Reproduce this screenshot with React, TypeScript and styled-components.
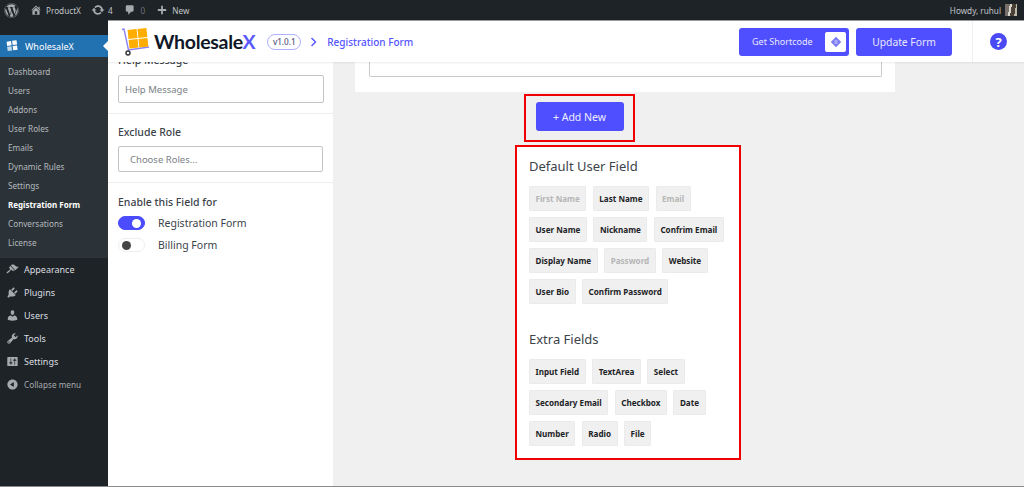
import React from "react";
import styled, { createGlobalStyle } from "styled-components";
import { FaWordpress } from "react-icons/fa";

const Global = createGlobalStyle`
  html, body { margin: 0; padding: 0; height: 100%; overflow: hidden; background: #f0f0f0; }
  #root { height: 100%; }
  * { box-sizing: border-box; }
`;

const Page = styled.div`
  width: 1024px;
  height: 487px;
  display: grid;
  grid-template-rows: 20px 1fr;
  grid-template-columns: 108px 1fr;
  font-family: "Noto Sans", "Open Sans", sans-serif;
  border-bottom: 1px solid #8a8a8a;
  overflow: hidden;
`;

const TopBar = styled.header`
  grid-column: 1 / 3;
  background: #1d2327;
  color: #c3c4c7;
  display: flex;
  align-items: center;
  font-size: 8.2px;
  padding: 0 7px 0 4px;
`;

const BarItem = styled.span<{ $gap?: number; $mr?: number; $dim?: boolean }>`
  display: inline-flex;
  align-items: center;
  gap: ${p => p.$gap ?? 4}px;
  margin-right: ${p => p.$mr ?? 11}px;
  color: ${p => (p.$dim ? "#6d7276" : "#c3c4c7")};
  svg { color: #a7aaad; flex: none; }
`;

const Howdy = styled.span`
  margin-left: auto;
  display: inline-flex;
  align-items: center;
  gap: 4px;
`;

const Avatar = styled.span`
  width: 12px;
  height: 12px;
  background: linear-gradient(100deg, #77706a 0 35%, #d8d4cc 35% 50%, #4b4036 50% 80%, #bdb6aa 80%);
`;

const Sidebar = styled.nav`
  background: #1d2327;
  padding-top: 15px;
  display: flex;
  flex-direction: column;
`;

const ActiveItem = styled.div`
  position: relative;
  height: 22px;
  background: #2271b1;
  color: #fff;
  font-size: 9px;
  display: flex;
  align-items: center;
  gap: 7px;
  padding-left: 6px;
  &::after {
    content: "";
    position: absolute;
    right: 0;
    top: 6px;
    border: 5px solid transparent;
    border-right-color: #fff;
    border-left-width: 0;
  }
`;

const SubMenu = styled.div`
  background: #2c3338;
  padding: 5px 0 6px 8px;
  display: flex;
  flex-direction: column;
`;

const SubLink = styled.div<{ $active?: boolean }>`
  height: 19px;
  line-height: 19px;
  font-size: ${p => (p.$active ? 8 : 8.2)}px;
  color: ${p => (p.$active ? "#fff" : "#b4b9be")};
  font-weight: ${p => (p.$active ? 700 : 400)};
`;

const MenuItem = styled.div<{ $muted?: boolean }>`
  height: 23px;
  display: flex;
  align-items: center;
  gap: 5px;
  padding-left: 6px;
  font-size: ${p => (p.$muted ? 8.2 : 9)}px;
  color: ${p => (p.$muted ? "#a7aaad" : "#dcdee0")};
  svg { color: #a7aaad; flex: none; }
`;

const Content = styled.div`
  min-width: 0;
  min-height: 0;
  display: flex;
  flex-direction: column;
  border-top: 1px solid #9a9a9a;
`;

const Header = styled.div`
  height: 41px;
  flex: none;
  background: #fff;
  box-shadow: 0 1px 2px rgba(0, 0, 0, 0.08);
  display: flex;
  align-items: center;
  padding-left: 13px;
  position: relative;
  z-index: 1;
`;

const Wordmark = styled.span`
  font-family: Lato, sans-serif;
  font-weight: 700;
  font-size: 19.5px;
  letter-spacing: -0.3px;
  color: #101828;
  margin-left: 4px;
  span { color: #5a5aff; }
`;

const Version = styled.span`
  margin-left: 12px;
  width: 34px;
  height: 16px;
  border: 1px solid #b0b0ff;
  border-radius: 8px;
  font-size: 8.2px;
  color: #55557a;
  font-weight: 500;
  display: flex;
  align-items: center;
  justify-content: center;
`;

const Crumb = styled.span`
  margin-left: 9px;
  display: inline-flex;
  align-items: center;
  gap: 10px;
  color: #5454ff;
  font-size: 10px;
  font-weight: 500;
`;

const Actions = styled.div`
  margin-left: auto;
  display: flex;
  align-items: stretch;
  height: 100%;
`;

const ButtonGroup = styled.div`
  display: flex;
  align-items: center;
  gap: 7px;
  padding-right: 20px;
`;

const HeaderButton = styled.button<{ $size: number }>`
  height: 28px;
  border: none;
  border-radius: 3px;
  background: #4f4fff;
  color: #e8e8ff;
  font-family: inherit;
  font-size: ${p => p.$size}px;
  white-space: nowrap;
  display: flex;
  align-items: center;
  justify-content: center;
  padding: 0;
`;

const ShortcodeButton = styled(HeaderButton)`
  width: 110px;
  padding-left: 13px;
  padding-right: 3px;
  justify-content: space-between;
`;

const UpdateButton = styled(HeaderButton)`
  width: 96px;
`;

const IconBox = styled.span`
  width: 21px;
  height: 20px;
  background: #fff;
  border-radius: 2px;
  display: flex;
  align-items: center;
  justify-content: center;
`;

const HelpCell = styled.div`
  width: 52px;
  border-left: 1px solid #f0f0f0;
  display: flex;
  align-items: center;
  justify-content: center;
`;

const HelpCircle = styled.span`
  width: 17px;
  height: 17px;
  border-radius: 50%;
  background: #4a4af5;
  color: #fff;
  font-size: 13px;
  font-weight: 700;
  display: flex;
  align-items: center;
  justify-content: center;
`;

const Body = styled.div`
  flex: 1;
  min-height: 0;
  display: flex;
  overflow: hidden;
`;

const SettingsPanel = styled.aside`
  width: 225px;
  flex: none;
  background: #fff;
`;

const PanelSection = styled.div<{ $top?: number }>`
  padding: ${p => p.$top ?? 11}px 9px 10px 10px;
  border-bottom: 1px solid #eeeeee;
  &:last-child { border-bottom: none; }
`;

const ClippedLabel = styled.div`
  height: 6px;
  display: flex;
  align-items: flex-end;
  overflow: hidden;
  font-size: 10.5px;
  font-weight: 500;
  color: #3c434a;
  line-height: 15px;
`;

const SectionLabel = styled.div`
  font-size: 10.5px;
  font-weight: 500;
  color: #3c434a;
  line-height: 15px;
`;

const TextBox = styled.div<{ $pad: number }>`
  height: 28px;
  width: 100%;
  margin-top: 7px;
  border: 1px solid #c4c4c4;
  border-radius: 2px;
  font-size: 9.5px;
  color: #7a7f85;
  display: flex;
  align-items: center;
  padding-left: ${p => p.$pad}px;
`;

const RoleBox = styled(TextBox)`
  width: 205px;
  height: 26px;
  margin-top: 6px;
`;

const ToggleRow = styled.div<{ $mt: number }>`
  display: flex;
  align-items: center;
  gap: 13px;
  margin-top: ${p => p.$mt}px;
  font-size: 10.5px;
  color: #3c434a;
`;

const Toggle = styled.span<{ $on?: boolean }>`
  width: 27px;
  height: 14px;
  flex: none;
  border-radius: 7px;
  padding: 2px 3px;
  display: flex;
  align-items: center;
  justify-content: ${p => (p.$on ? "flex-end" : "flex-start")};
  background: ${p => (p.$on ? "#4b4bff" : "#fff")};
  border: 1px solid ${p => (p.$on ? "#4b4bff" : "#eeeeee")};
  &::before {
    content: "";
    width: 9px;
    height: 9px;
    border-radius: 50%;
    background: ${p => (p.$on ? "#fff" : "#444")};
  }
`;

const Main = styled.main`
  flex: 1;
  min-width: 0;
  padding-left: 22px;
  display: flex;
  flex-direction: column;
`;

const FormCard = styled.div`
  width: 540px;
  height: 30px;
  flex: none;
  background: #fff;
  padding: 0 13px 15px 14px;
`;

const FormInput = styled.div`
  height: 15px;
  border: 1px solid #c9c9c9;
  border-top: none;
  border-radius: 0 0 2px 2px;
`;

const Palette = styled.div`
  width: 226px;
  margin-left: 160px;
  display: flex;
  flex-direction: column;
  align-items: flex-start;
`;

const AddFrame = styled.div`
  width: 111px;
  height: 48px;
  margin: 2px 0 0 9px;
  padding-top: 6px;
  border: 2px solid #f00000;
  display: flex;
  align-items: flex-start;
  justify-content: center;
`;

const AddButton = styled.button`
  width: 88px;
  height: 29px;
  border: none;
  border-radius: 3px;
  background: #4f4fff;
  color: #eeeeff;
  font-family: inherit;
  font-size: 10.5px;
  padding: 0;
`;

const FieldFrame = styled.div`
  width: 226px;
  height: 315px;
  margin-top: 3px;
  background: #fff;
  border: 2px solid #f00000;
  padding: 10px 12px 0 12px;
`;

const FieldTitle = styled.h3<{ $mt?: number }>`
  margin: ${p => p.$mt ?? 0}px 0 0 0;
  font-size: 13px;
  line-height: 18px;
  font-weight: 400;
  color: #3c434a;
`;

const ChipGrid = styled.div`
  display: flex;
  flex-wrap: wrap;
  gap: 6px 6.5px;
  margin-top: 11px;
`;

const Chip = styled.span<{ $off?: boolean }>`
  height: 25px;
  padding: 0 5.5px;
  background: #f0f0f0;
  border: 1px solid #ebebeb;
  border-radius: 1px;
  font-size: 8.1px;
  font-weight: 700;
  color: ${p => (p.$off ? "#b6b6b6" : "#1d2327")};
  display: inline-flex;
  align-items: center;
  white-space: nowrap;
`;

const subLinks = ["Dashboard", "Users", "Addons", "User Roles", "Emails", "Dynamic Rules", "Settings", "Registration Form", "Conversations", "License"];
const defaults: [string, boolean?][] = [["First Name", true], ["Last Name"], ["Email", true], ["User Name"], ["Nickname"], ["Confrim Email"], ["Display Name"], ["Password", true], ["Website"], ["User Bio"], ["Confirm Password"]];
const extras = ["Input Field", "TextArea", "Select", "Secondary Email", "Checkbox", "Date", "Number", "Radio", "File"];

const Dash = ({ d, size = 13 }: { d: string; size?: number }) => (
  <svg width={size} height={size} viewBox="0 0 20 20" fill="currentColor"><path d={d} /></svg>
);

const icons = {
  home: "M16 8.5l1.53 1.53-1.06 1.06L10 4.62l-6.47 6.47-1.06-1.06L10 2.5l4 4v-2h2v4zm-6-2.46l6 5.99V18H4v-5.97zM12 17v-5H8v5h4z",
  update: "M10.2 3.28c3.53 0 6.43 2.61 6.92 6h2.08l-3.5 4-3.5-4h2.32c-.45-1.97-2.21-3.44-4.32-3.44-1.45 0-2.73.71-3.54 1.78L4.95 5.66C6.23 4.2 8.11 3.28 10.2 3.28zm-.4 13.44c-3.52 0-6.43-2.61-6.92-6H.8l3.5-4c1.17 1.33 2.33 2.67 3.5 4H5.48c.45 1.97 2.21 3.44 4.32 3.44 1.45 0 2.73-.71 3.54-1.77l1.71 1.95c-1.28 1.46-3.15 2.38-5.25 2.38z",
  comment: "M5 2h9c1.1 0 2 .9 2 2v7c0 1.1-.9 2-2 2h-2l-5 5v-5H5c-1.1 0-2-.9-2-2V4c0-1.1.9-2 2-2z",
  plus: "M17 8.5v3h-5.5V17h-3v-5.5H3v-3h5.5V3h3v5.5H17z",
  brush: "M14.48 11.06L7.41 3.99l1.5-1.5c.5-.56 2.3-.47 3.51.32 1.21.8 1.43 1.28 2.91 2.1 1.18.64 2.45 1.26 4.45.85zm-.71.71L6.7 4.7 4.93 6.47c-.39.39-.39 1.02 0 1.41l1.06 1.06c.39.39.39 1.03 0 1.42-.6.6-1.43 1.11-2.21 1.69-.35.26-.7.53-1.01.84C1.43 13.23.4 14.93 1.09 15.62c.69.69 2.39-.34 3.73-1.68.31-.31.58-.66.84-1.01.58-.78 1.09-1.61 1.69-2.21.39-.39 1.03-.39 1.42 0l1.06 1.06c.39.39 1.02.39 1.41 0z",
  plugin: "M13.11 4.36L9.87 7.6 8 5.73l3.24-3.24c.35-.34 1.05-.2 1.56.32.52.51.66 1.21.31 1.55zm-8 1.77l.91-1.12 9.01 9.01-1.19.84c-.71.71-2.63 1.16-3.82 1.16H6.14L4.9 17.26c-.59.59-1.54.59-2.12 0-.59-.58-.59-1.53 0-2.12l1.24-1.24v-3.88c0-1.13.4-3.19 1.09-3.89zm7.26 3.97l3.24-3.24c.34-.35 1.04-.21 1.55.31.52.51.66 1.21.31 1.55l-3.24 3.25z",
  user: "M10 9.25c-2.27 0-2.73-3.44-2.73-3.44C7 4.02 7.82 2 9.97 2c2.16 0 2.98 2.02 2.71 3.81 0 0-.41 3.44-2.68 3.44zm0 2.57L12.72 10c2.39 0 4.52 2.33 4.52 4.53v2.49s-3.65 1.13-7.24 1.13c-3.65 0-7.24-1.13-7.24-1.13v-2.49c0-2.25 1.94-4.48 4.47-4.48z",
  tools: "M16.68 9.77c-1.34 1.34-3.3 1.67-4.95.99l-5.41 6.52c-.99.99-2.59.99-3.58 0s-.99-2.59 0-3.57l6.52-5.42c-.68-1.65-.35-3.61.99-4.95 1.28-1.28 3.12-1.62 4.72-1.06l-2.89 2.89 2.82 2.82 2.86-2.87c.53 1.58.18 3.39-1.08 4.65zM3.81 16.21c.4.39 1.04.39 1.43 0 .4-.4.4-1.04 0-1.43-.39-.4-1.03-.4-1.43 0-.39.39-.39 1.03 0 1.43z",
  settings: "M18 16V4c0-.55-.45-1-1-1H3c-.55 0-1 .45-1 1v12c0 .55.45 1 1 1h14c.55 0 1-.45 1-1zM8 11h1c.55 0 1 .45 1 1s-.45 1-1 1H8v1.5c0 .28-.22.5-.5.5s-.5-.22-.5-.5V13H6c-.55 0-1-.45-1-1s.45-1 1-1h1V5.5c0-.28.22-.5.5-.5s.5.22.5.5V11zm5-2h-1c-.55 0-1-.45-1-1s.45-1 1-1h1V5.5c0-.28.22-.5.5-.5s.5.22.5.5V7h1c.55 0 1 .45 1 1s-.45 1-1 1h-1v5.5c0 .28-.22.5-.5.5s-.5-.22-.5-.5V9z",
  collapse: "M10 2.16c4.33 0 7.84 3.51 7.84 7.84s-3.51 7.84-7.84 7.84S2.16 14.33 2.16 10 5.71 2.16 10 2.16zm2 11.72V6.12L6.18 9.97z",
};

const MenuLogo = () => (
  <svg width="12" height="12" viewBox="0 0 14 14" fill="#fff">
    <rect x="1" y="1.5" width="5.2" height="5" transform="rotate(-8 4 4)" />
    <rect x="7.4" y="0.6" width="5.2" height="5" transform="rotate(-8 10 3)" />
    <rect x="1.6" y="7.6" width="5.2" height="5" opacity="0.75" transform="rotate(-8 4 10)" />
    <rect x="8" y="6.8" width="5.2" height="5" transform="rotate(-8 10 9)" />
  </svg>
);

const Cart = () => (
  <svg width="29" height="28" viewBox="0 0 29 28">
    <path d="M1 1.5 L3 1 L7.5 22 L28 19" fill="none" stroke="#8a80f5" strokeWidth="1.4" />
    <circle cx="7" cy="25" r="2" fill="#fff" stroke="#333" strokeWidth="1.4" />
    <g transform="rotate(-6 17 10)">
      <rect x="7.5" y="1" width="9" height="9" fill="#ffad00" />
      <rect x="17.4" y="1" width="9" height="9" fill="#ffad00" />
      <rect x="7.5" y="11" width="9" height="8.5" fill="#ffad00" />
      <rect x="17.4" y="11" width="9" height="8.5" fill="#ffad00" />
    </g>
  </svg>
);

export default function App() {
  return (
    <>
      <Global />
      <Page>
        <TopBar>
          <BarItem $mr={11}><FaWordpress size={15} /></BarItem>
          <BarItem $mr={10} $gap={4}><Dash d={icons.home} size={12} />ProductX</BarItem>
          <BarItem $mr={11} $gap={3}><Dash d={icons.update} size={14} />4</BarItem>
          <BarItem $mr={11} $gap={5} $dim><Dash d={icons.comment} size={12} />0</BarItem>
          <BarItem $gap={4}><Dash d={icons.plus} size={12} />New</BarItem>
          <Howdy>Howdy, ruhul<Avatar /></Howdy>
        </TopBar>

        <Sidebar>
          <ActiveItem><MenuLogo />WholesaleX</ActiveItem>
          <SubMenu>
            {subLinks.map(l => <SubLink key={l} $active={l === "Registration Form"}>{l}</SubLink>)}
          </SubMenu>
          <MenuItem><Dash d={icons.brush} />Appearance</MenuItem>
          <MenuItem><Dash d={icons.plugin} />Plugins</MenuItem>
          <MenuItem><Dash d={icons.user} />Users</MenuItem>
          <MenuItem><Dash d={icons.tools} />Tools</MenuItem>
          <MenuItem><Dash d={icons.settings} />Settings</MenuItem>
          <MenuItem $muted><Dash d={icons.collapse} />Collapse menu</MenuItem>
        </Sidebar>

        <Content>
          <Header>
            <Cart />
            <Wordmark>Wholesale<span>X</span></Wordmark>
            <Version>v1.0.1</Version>
            <Crumb>
              <svg width="7" height="10" viewBox="0 0 7 10"><path d="M1.5 1 5.5 5l-4 4" fill="none" stroke="#5454ff" strokeWidth="1.4" /></svg>
              Registration Form
            </Crumb>
            <Actions>
              <ButtonGroup>
                <ShortcodeButton $size={9}>
                  Get Shortcode
                  <IconBox>
                    <svg width="12" height="12" viewBox="0 0 12 12"><path d="M6 .8 11.2 6 6 11.2.8 6z" fill="#7b7bf5" /><path d="M4.5 5h3M4.5 7h3" stroke="#fff" strokeWidth="0.7" /></svg>
                  </IconBox>
                </ShortcodeButton>
                <UpdateButton $size={10.3}>Update Form</UpdateButton>
              </ButtonGroup>
              <HelpCell><HelpCircle>?</HelpCircle></HelpCell>
            </Actions>
          </Header>

          <Body>
            <SettingsPanel>
              <PanelSection $top={0}>
                <ClippedLabel>Help Message</ClippedLabel>
                <TextBox $pad={6}>Help Message</TextBox>
              </PanelSection>
              <PanelSection>
                <SectionLabel>Exclude Role</SectionLabel>
                <RoleBox $pad={11}>Choose Roles...</RoleBox>
              </PanelSection>
              <PanelSection $top={12}>
                <SectionLabel>Enable this Field for</SectionLabel>
                <ToggleRow $mt={6}><Toggle $on />Registration Form</ToggleRow>
                <ToggleRow $mt={8}><Toggle />Billing Form</ToggleRow>
              </PanelSection>
            </SettingsPanel>

            <Main>
              <FormCard><FormInput /></FormCard>
              <Palette>
                <AddFrame><AddButton>+ Add New</AddButton></AddFrame>
                <FieldFrame>
                  <FieldTitle>Default User Field</FieldTitle>
                  <ChipGrid>
                    {defaults.map(([l, off]) => <Chip key={l} $off={off}>{l}</Chip>)}
                  </ChipGrid>
                  <FieldTitle $mt={26}>Extra Fields</FieldTitle>
                  <ChipGrid>
                    {extras.map(l => <Chip key={l}>{l}</Chip>)}
                  </ChipGrid>
                </FieldFrame>
              </Palette>
            </Main>
          </Body>
        </Content>
      </Page>
    </>
  );
}
